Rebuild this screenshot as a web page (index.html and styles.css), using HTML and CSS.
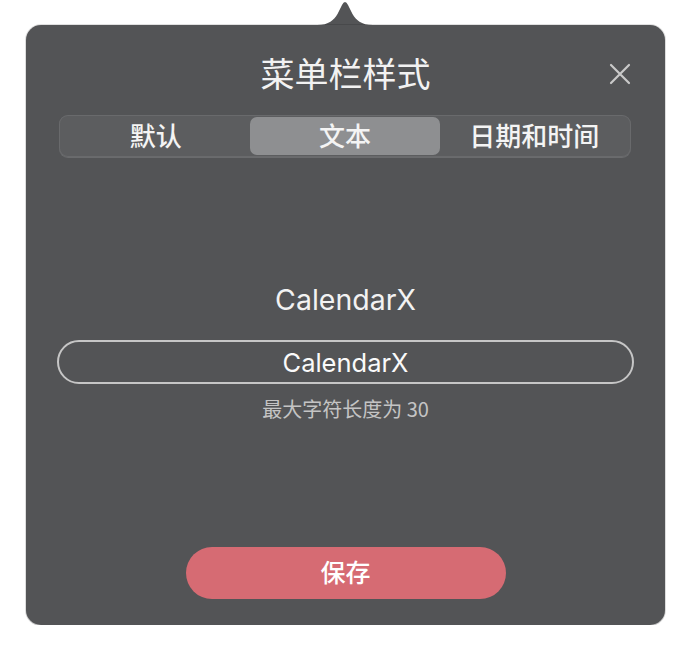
FILE: index.html
```html
<!DOCTYPE html>
<html lang="zh-CN">
<head>
<meta charset="utf-8">
<title>菜单栏样式</title>
<link rel="stylesheet" href="styles.css">
</head>
<body>
<div class="stage">
  <svg class="arrow" width="56" height="26" viewBox="0 0 56 26" aria-hidden="true">
    <path d="M0 25 C12 25 17 20 20.5 14 L25 5 Q28 -1 31 5 L35.5 14 C39 20 44 25 56 25 L56 26 L0 26 Z" fill="#535456"/>
  </svg>
  <div class="panel">
    <button class="close" aria-label="关闭">
      <svg width="24" height="24" viewBox="0 0 24 24"><path d="M3 3 L21 21 M21 3 L3 21" stroke="#c9c9c9" stroke-width="2.2" stroke-linecap="round" fill="none"/></svg>
    </button>
    <h1 class="title">菜单栏样式</h1>
    <div class="segments">
      <div class="seg">默认</div>
      <div class="seg active">文本</div>
      <div class="seg">日期和时间</div>
    </div>
    <div class="preview">CalendarX</div>
    <div class="field">CalendarX</div>
    <div class="hint">最大字符长度为 30</div>
    <div class="footer">
      <button class="save">保存</button>
    </div>
  </div>
</div>
</body>
</html>
```
FILE: styles.css
```css
html, body {
  margin: 0;
  padding: 0;
  background: #ffffff;
}
body {
  font-family: "Inter", "Noto Sans CJK SC", sans-serif;
  color: #f2f2f2;
}
.stage {
  position: relative;
  padding: 25px 0 0 26px;
}
.arrow {
  position: absolute;
  left: 317px;
  top: 0;
  display: block;
}
.panel {
  position: relative;
  width: 639px;
  height: 600px;
  box-sizing: border-box;
  background: #535456;
  border-radius: 15px;
  box-shadow: 0 0 0 1px rgba(0, 0, 0, 0.12), 0 1px 1px rgba(0, 0, 0, 0.15);
  display: flex;
  flex-direction: column;
  padding: 28px 0 26px;
}
.close {
  position: absolute;
  right: 33px;
  top: 37px;
  width: 24px;
  height: 24px;
  padding: 0;
  border: 0;
  background: none;
  display: block;
}
.close svg { display: block; }
.title {
  margin: 0;
  text-align: center;
  font-family: "Noto Sans CJK SC", sans-serif;
  font-weight: 400;
  font-size: 34px;
  line-height: 40px;
  color: #f2f2f2;
}
.segments {
  margin: 22px 34px 0 33px;
  height: 42px;
  box-sizing: border-box;
  padding: 2px;
  border-radius: 9px;
  background: #5c5d5f;
  box-shadow: inset 0 0 0 1px #696a6c, 0 1px 0 #6a6b6d;
  display: flex;
}
.seg {
  flex: 1;
  display: flex;
  align-items: center;
  justify-content: center;
  padding-bottom: 4px;
  font-family: "Noto Sans CJK SC", sans-serif;
  font-size: 26px;
  font-weight: 500;
  color: #f4f4f4;
  border-radius: 7px;
}
.seg.active {
  background: #8e8f91;
}
.preview {
  margin-top: 125px;
  text-align: center;
  font-size: 28.5px;
  line-height: 36px;
  color: #f2f2f2;
}
.field {
  margin: 22px 31px 0 31px;
  height: 44px;
  box-sizing: border-box;
  border: 2px solid #c6c6c6;
  border-radius: 22px;
  display: flex;
  align-items: center;
  justify-content: center;
  font-size: 25.5px;
  color: #fafafa;
}
.hint {
  margin-top: 12px;
  text-align: center;
  font-family: "Noto Sans CJK SC", sans-serif;
  font-size: 20px;
  line-height: 26px;
  color: #c4c4c4;
}
.footer {
  margin-top: auto;
  display: flex;
  justify-content: center;
}
.save {
  width: 320px;
  height: 52px;
  border: 0;
  border-radius: 26px;
  background: #d66b73;
  color: #ffffff;
  font-family: "Noto Sans CJK SC", sans-serif;
  font-size: 25px;
  font-weight: 500;
  padding: 0 0 4px;
}
```
